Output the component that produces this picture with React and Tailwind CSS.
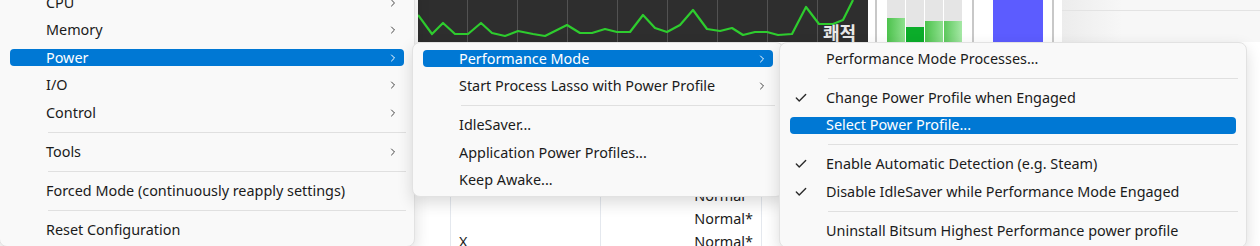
import { Check, ChevronRight } from 'lucide-react';

const font = { fontFamily: '"Noto Sans", "Noto Sans CJK KR", sans-serif' };

// graph points, absolute page x / y
const graphPts = [
    [418, 15], [432, 34], [443, 23], [455, 34], [468, 34], [481, 23], [492, 33], [505, 36],
    [518, 31], [533, 34], [545, 36], [567, 25], [580, 33], [592, 33], [605, 29], [617, 32],
    [630, 32], [643, 15], [655, 28], [667, 32], [680, 25], [693, 10], [707, 29], [720, 31],
    [732, 28], [743, 35], [755, 32], [767, 32], [778, 35], [792, 34], [806, 7], [819, 24],
    [833, 24], [843, 20], [853, 0],
];

const mainMenu = [
    { label: 'CPU', sub: true },
    { label: 'Memory', sub: true },
    { label: 'Power', sub: true, active: true },
    { label: 'I/O', sub: true },
    { label: 'Control', sub: true },
    { sep: true },
    { label: 'Tools', sub: true },
    { sep: true },
    { label: 'Forced Mode (continuously reapply settings)' },
    { sep: true },
    { label: 'Reset Configuration' },
];

const powerMenu = [
    { label: 'Performance Mode', sub: true, active: true },
    { label: 'Start Process Lasso with Power Profile', sub: true },
    { sep: true },
    { label: 'IdleSaver...' },
    { label: 'Application Power Profiles...' },
    { label: 'Keep Awake...' },
];

const perfMenu = [
    { label: 'Performance Mode Processes...' },
    { sep: true },
    { label: 'Change Power Profile when Engaged', checked: true },
    { label: 'Select Power Profile...', active: true },
    { sep: true },
    { label: 'Enable Automatic Detection (e.g. Steam)', checked: true },
    { label: 'Disable IdleSaver while Performance Mode Engaged', checked: true },
    { sep: true },
    { label: 'Uninstall Bitsum Highest Performance power profile' },
];

function MenuItem({ item }) {
    if (item.sep) {
        return (
            <div className="h-[11.5px] flex items-center">
                <div className="h-px flex-1 ml-[48px] mr-[8px] bg-[#e0e0e0]" />
            </div>
        );
    }
    return (
        <div className="h-[27.5px] flex items-center">
            <div className={`relative h-[17px] flex-1 mx-[10px] rounded-[4px] flex items-center ${item.active ? 'bg-[#0078d4] text-white' : 'text-[#1b1b1b]'}`}>
                <div className="w-[36px] pl-[4px] flex items-center">
                    {item.checked && <Check size={14} strokeWidth={2.4} className="text-[#2b2b2b]" />}
                </div>
                <span className="text-[14.4px] leading-none whitespace-nowrap">{item.label}</span>
                {item.sub && (
                    <ChevronRight size={12} strokeWidth={2} className={`absolute right-[5px] ${item.active ? 'text-white' : 'text-[#444]'}`} />
                )}
            </div>
        </div>
    );
}

function Menu({ items, className }) {
    return (
        <div className={`absolute bg-[#f9f9f9] border border-[#e2e2e2] rounded-[8px] py-[2px] shadow-[0_6px_16px_rgba(0,0,0,0.14)] ${className}`}>
            {items.map((item, i) => <MenuItem key={i} item={item} />)}
        </div>
    );
}

export default function App() {
    return (
        <div className="relative w-[1260px] h-[246px] overflow-hidden bg-white" style={font}>
            {/* app behind the menus */}
            <div className="flex flex-col">
                <div className="flex h-[42px]">
                    <div className="w-[418px] bg-white" />
                    <div className="relative w-[450px] bg-[#2e2e2e] overflow-hidden">
                        <svg width="450" height="42" className="absolute inset-0">
                            {[0, 1, 2, 3, 4, 5, 6, 7].map(k => (
                                <line key={k} x1={49.5 + k * 50} y1="0" x2={49.5 + k * 50} y2="42" stroke="#525252" strokeWidth="1" />
                            ))}
                            <polyline
                                points={graphPts.map(([x, y]) => `${x - 418},${y}`).join(' ')}
                                fill="none" stroke="#2ecc2e" strokeWidth="2.2" strokeLinejoin="round"
                            />
                        </svg>
                        <span className="absolute left-[405px] top-[23px] text-[18px] font-bold text-[#e8e8e8] leading-none" style={{ fontFamily: '"Noto Sans CJK KR", sans-serif' }}>쾌적</span>
                    </div>
                    <div className="w-[7px] bg-white" />
                    <div className="w-[2px] bg-[#c8c8c8]" />
                    <div className="w-[10px] bg-white" />
                    <div className="flex gap-[1px]">
                        {[{ top: 18, c: 'bg-[linear-gradient(90deg,#4cc24c,#8fe08f)]' }, { top: 27, c: 'bg-[#0bad2a]' }, { top: 21, c: 'bg-[linear-gradient(90deg,#4cc24c,#8fe08f)]' }, { top: 21, c: 'bg-[linear-gradient(90deg,#5cc85c,#a6e8a6)]' }].map((b, i) => (
                            <div key={i} className="w-[18px] flex flex-col bg-[#e5e5e5]">
                                <div style={{ height: b.top }} />
                                <div className={`flex-1 ${b.c}`} />
                            </div>
                        ))}
                    </div>
                    <div className="w-[10px] bg-white" />
                    <div className="w-[2px] bg-[#c8c8c8]" />
                    <div className="w-[19px] bg-white" />
                    <div className="w-[50px] bg-[#5c5cff]" />
                    <div className="w-[9px] bg-white" />
                    <div className="w-[2px] bg-[#c8c8c8]" />
                    <div className="w-[8px] bg-white" />
                    <div className="flex-1 flex flex-col bg-[linear-gradient(90deg,#ececec,#f7f7f7_60px,#f7f7f7)]">
                        <div className="h-[11px] border-b border-[#e3e3e3]" />
                    </div>
                </div>
                <div className="flex h-[204px] text-[14.4px] text-[#1b1b1b]">
                    <div className="w-[451px] border-r border-[#e4e8ee] bg-white" />
                    <div className="w-[150px] border-r border-[#e4e8ee] bg-white flex flex-col justify-end">
                        <div className="h-[14px] pl-[8px] leading-[20px]">X</div>
                    </div>
                    <div className="w-[161px] border-r border-[#e4e8ee] bg-white flex flex-col justify-end items-end pr-[8px] leading-[20px]">
                        <div className="h-[23px]">Normal*</div>
                        <div className="h-[23px]">Normal*</div>
                        <div className="h-[14px]">Normal*</div>
                    </div>
                    <div className="flex-1 bg-white" />
                </div>
            </div>

            <Menu items={mainMenu} className="left-[-1px] top-[-14px] w-[416px] z-10" />
            <Menu items={powerMenu} className="left-[412px] top-[42px] w-[372px] z-20" />
            <Menu items={perfMenu} className="left-[779px] top-[42px] w-[468px] z-30" />
        </div>
    );
}
